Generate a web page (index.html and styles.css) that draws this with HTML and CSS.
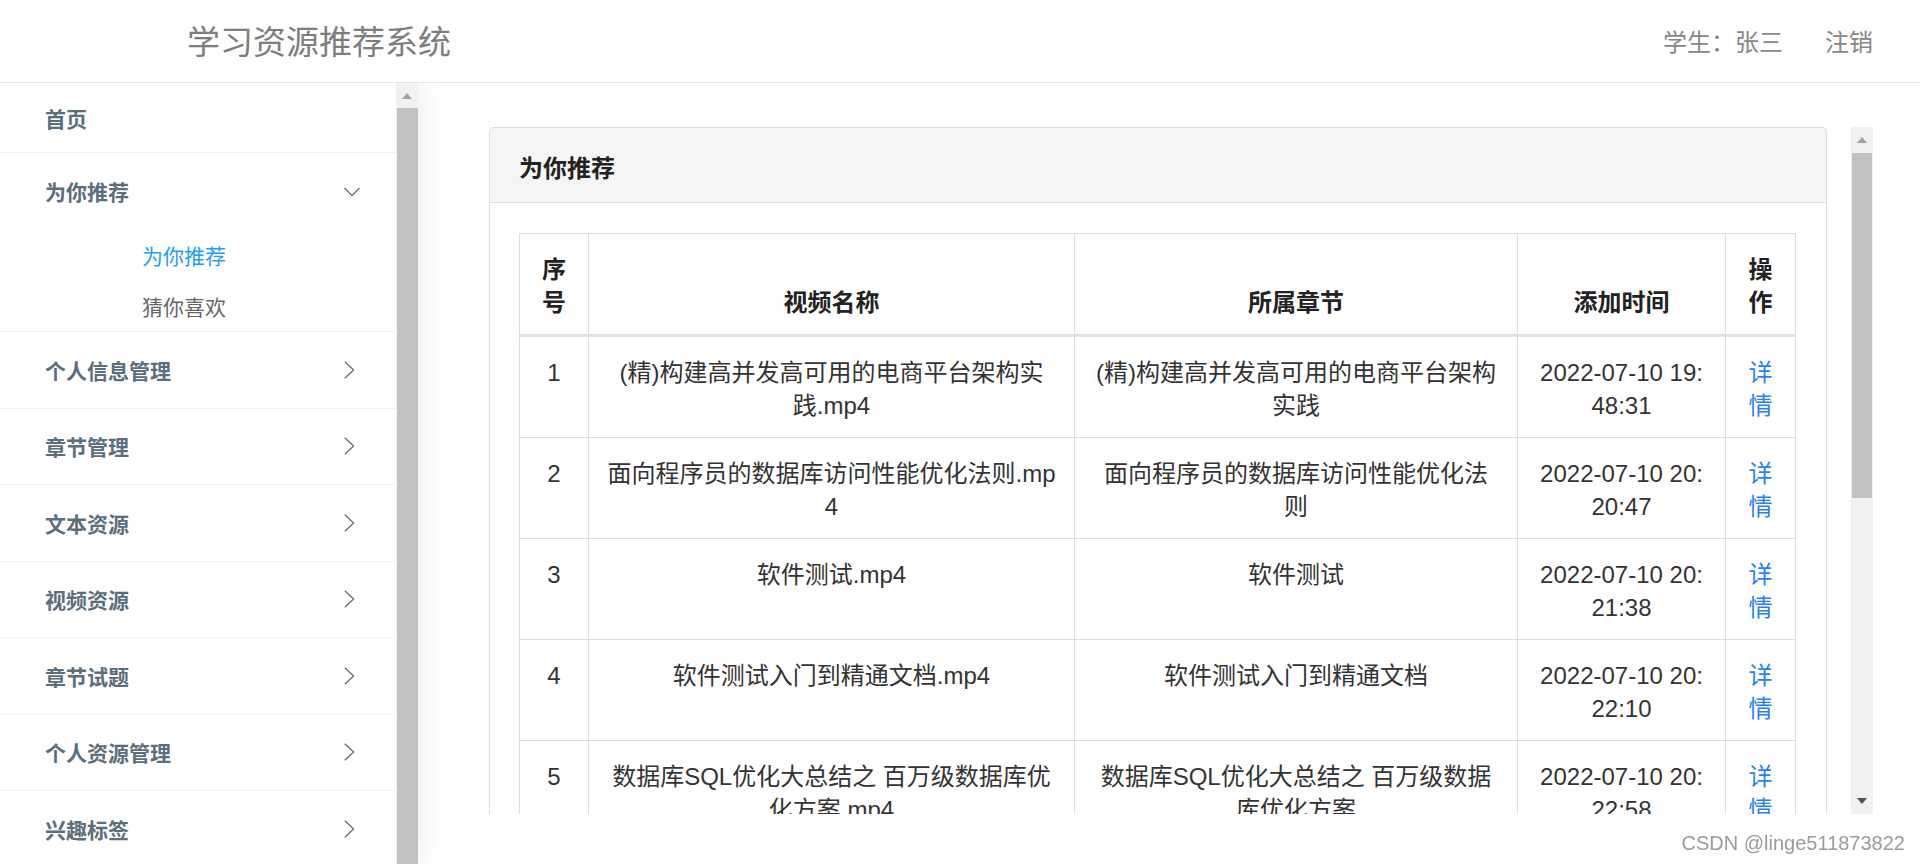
FILE: index.html
```html
<!DOCTYPE html>
<html lang="zh-CN">
<head>
<meta charset="utf-8">
<title>学习资源推荐系统</title>
<link rel="stylesheet" href="styles.css">
</head>
<body>
<header class="topbar">
  <div class="brand">学习资源推荐系统</div>
  <nav class="user-nav">
    <span class="user-name">学生：张三</span>
    <a class="logout">注销</a>
  </nav>
</header>

<div class="layout">
  <aside class="side">
    <ul class="menu">
      <li class="menu-item home"><div class="menu-title">首页</div></li>
      <li class="menu-item open">
        <div class="menu-title">为你推荐
          <svg class="chev-down" width="16" height="10" viewBox="0 0 16 10"><path d="M0.6 1 L8 8.6 L15.4 1" fill="none" stroke="#5f6f7b" stroke-width="1.3"/></svg>
        </div>
        <ul class="submenu">
          <li class="sub-item active">为你推荐</li>
          <li class="sub-item">猜你喜欢</li>
        </ul>
      </li>
      <li class="menu-item"><div class="menu-title">个人信息管理
        <svg class="chev-right" width="16" height="18" viewBox="0 0 16 18"><path d="M0.8 0.8 L9.6 9 L0.8 17.2" fill="none" stroke="#5f6f7b" stroke-width="1.3"/></svg></div></li>
      <li class="menu-item"><div class="menu-title">章节管理
        <svg class="chev-right" width="16" height="18" viewBox="0 0 16 18"><path d="M0.8 0.8 L9.6 9 L0.8 17.2" fill="none" stroke="#5f6f7b" stroke-width="1.3"/></svg></div></li>
      <li class="menu-item"><div class="menu-title">文本资源
        <svg class="chev-right" width="16" height="18" viewBox="0 0 16 18"><path d="M0.8 0.8 L9.6 9 L0.8 17.2" fill="none" stroke="#5f6f7b" stroke-width="1.3"/></svg></div></li>
      <li class="menu-item"><div class="menu-title">视频资源
        <svg class="chev-right" width="16" height="18" viewBox="0 0 16 18"><path d="M0.8 0.8 L9.6 9 L0.8 17.2" fill="none" stroke="#5f6f7b" stroke-width="1.3"/></svg></div></li>
      <li class="menu-item"><div class="menu-title">章节试题
        <svg class="chev-right" width="16" height="18" viewBox="0 0 16 18"><path d="M0.8 0.8 L9.6 9 L0.8 17.2" fill="none" stroke="#5f6f7b" stroke-width="1.3"/></svg></div></li>
      <li class="menu-item"><div class="menu-title">个人资源管理
        <svg class="chev-right" width="16" height="18" viewBox="0 0 16 18"><path d="M0.8 0.8 L9.6 9 L0.8 17.2" fill="none" stroke="#5f6f7b" stroke-width="1.3"/></svg></div></li>
      <li class="menu-item"><div class="menu-title">兴趣标签
        <svg class="chev-right" width="16" height="18" viewBox="0 0 16 18"><path d="M0.8 0.8 L9.6 9 L0.8 17.2" fill="none" stroke="#5f6f7b" stroke-width="1.3"/></svg></div></li>
    </ul>
    <div class="scrollbar side-scrollbar">
      <div class="sb-btn"><span class="tri-up"></span></div>
      <div class="sb-thumb side-thumb"></div>
    </div>
  </aside>

  <main class="content">
    <div class="scroll-box">
      <div class="viewport">
        <section class="panel">
          <div class="panel-head">为你推荐</div>
          <div class="panel-body">
            <table class="data-table">
              <colgroup>
                <col class="c-no"><col class="c-name"><col class="c-chapter"><col class="c-time"><col class="c-op">
              </colgroup>
              <thead>
                <tr><th>序号</th><th>视频名称</th><th>所属章节</th><th>添加时间</th><th>操作</th></tr>
              </thead>
              <tbody>
                <tr>
                  <td>1</td>
                  <td>(精)构建高并发高可用的电商平台架构实<br>践.mp4</td>
                  <td>(精)构建高并发高可用的电商平台架构实践</td>
                  <td>2022-07-10 19:48:31</td>
                  <td><a class="link">详情</a></td>
                </tr>
                <tr>
                  <td>2</td>
                  <td>面向程序员的数据库访问性能优化法则.mp4</td>
                  <td>面向程序员的数据库访问性能优化法则</td>
                  <td>2022-07-10 20:20:47</td>
                  <td><a class="link">详情</a></td>
                </tr>
                <tr>
                  <td>3</td>
                  <td>软件测试.mp4</td>
                  <td>软件测试</td>
                  <td>2022-07-10 20:21:38</td>
                  <td><a class="link">详情</a></td>
                </tr>
                <tr>
                  <td>4</td>
                  <td>软件测试入门到精通文档.mp4</td>
                  <td>软件测试入门到精通文档</td>
                  <td>2022-07-10 20:22:10</td>
                  <td><a class="link">详情</a></td>
                </tr>
                <tr>
                  <td>5</td>
                  <td>数据库SQL优化大总结之 百万级数据库优化方案.mp4</td>
                  <td>数据库SQL优化大总结之 百万级数据库优化方案</td>
                  <td>2022-07-10 20:22:58</td>
                  <td><a class="link">详情</a></td>
                </tr>
              </tbody>
            </table>
          </div>
        </section>
      </div>
      <div class="scrollbar main-scrollbar">
        <div class="sb-btn main-btn"><span class="tri-up"></span></div>
        <div class="sb-track">
          <div class="sb-thumb main-thumb"></div>
        </div>
        <div class="sb-btn main-btn"><span class="tri-down"></span></div>
      </div>
    </div>
  </main>
</div>

<div class="watermark">CSDN @linge511873822</div>
</body>
</html>
```

FILE: styles.css
```css
* {
  box-sizing: border-box;
}

html,
body {
  margin: 0;
  height: 100%;
}

body {
  font-family: "Noto Sans CJK SC", sans-serif;
  background: #ffffff;
  color: #333333;
  overflow: hidden;
}

/* ---------- top bar ---------- */
.topbar {
  position: relative;
  z-index: 2;
  height: 83px;
  display: flex;
  align-items: center;
  justify-content: space-between;
  padding: 0 47px 0 187px;
  background: #ffffff;
  border-bottom: 1px solid #e6e6e6;
}

.brand {
  font-size: 33px;
  line-height: 40px;
  color: #7d7d7d;
  margin-top: -3px;
}

.user-nav {
  display: flex;
  align-items: center;
  gap: 42px;
  font-size: 24px;
  line-height: 32px;
  color: #878787;
}

.logout {
  color: #878787;
  cursor: pointer;
}

/* ---------- layout ---------- */
.layout {
  display: flex;
  height: calc(100vh - 83px);
}

.side {
  position: relative;
  z-index: 1;
  display: flex;
  width: 418px;
  flex-shrink: 0;
  overflow: hidden;
  background: #ffffff;
  box-shadow: 4px 0 26px rgba(0, 0, 0, 0.07);
}

.menu {
  width: 396px;
  flex-shrink: 0;
  list-style: none;
  margin: 0;
  padding: 0;
}

.menu-item {
  border-bottom: 1px solid #f1f1f1;
}

.menu-title {
  display: flex;
  align-items: center;
  justify-content: space-between;
  height: 75.5px;
  padding: 0 36px 0 45px;
  font-size: 21px;
  font-weight: 700;
  color: #5b6e7b;
}

.home .menu-title {
  height: 69px;
}

.open .menu-title {
  height: 76px;
}

.chev-down {
  margin-top: 2px;
}

.submenu {
  list-style: none;
  margin: 0;
  padding: 0;
}

.sub-item {
  height: 51px;
  display: flex;
  align-items: center;
  padding-left: 142px;
  font-size: 21px;
  color: #666666;
}

.sub-item.active {
  color: #1ea0f2;
}

/* ---------- fake scrollbars ---------- */
.scrollbar {
  width: 22px;
  flex-shrink: 0;
  display: flex;
  flex-direction: column;
  background: #f1f1f1;
}

.sb-btn {
  height: 25px;
  display: flex;
  align-items: center;
  justify-content: center;
  flex-shrink: 0;
}

.main-btn {
  height: 26px;
}

.tri-up {
  width: 0;
  height: 0;
  border-left: 5px solid transparent;
  border-right: 5px solid transparent;
  border-bottom: 6px solid #a3a3a3;
}

.tri-down {
  width: 0;
  height: 0;
  border-left: 5px solid transparent;
  border-right: 5px solid transparent;
  border-top: 6px solid #505050;
}

.sb-thumb {
  background: #c1c1c1;
}

.side-thumb {
  flex: 1;
  margin-left: 1px;
}

.sb-track {
  flex: 1;
  padding: 0 1px;
}

.main-thumb {
  height: 345px;
}

/* ---------- main content ---------- */
.content {
  flex: 1;
  min-width: 0;
  padding: 44px 47px 0 71px;
}

.scroll-box {
  display: flex;
  gap: 24px;
  height: 687px;
}

.viewport {
  flex: 1;
  min-width: 0;
  overflow: hidden;
}

.panel {
  border: 1px solid #dddddd;
  border-radius: 4px;
  background: #ffffff;
}

.panel-head {
  height: 75px;
  display: flex;
  align-items: center;
  padding: 3px 29px 0;
  background: #f5f5f5;
  border-bottom: 1px solid #dddddd;
  border-radius: 4px 4px 0 0;
  font-size: 24px;
  font-weight: 700;
  color: #222222;
}

.panel-body {
  padding: 30px 31px 40px 29px;
}

/* ---------- table ---------- */
.data-table {
  width: 100%;
  border-collapse: collapse;
  table-layout: fixed;
  font-family: "Liberation Sans", "Noto Sans CJK SC", sans-serif;
  font-size: 24px;
  line-height: 33px;
  color: #333333;
}

.c-no { width: 69px; }
.c-name { width: 486px; }
.c-chapter { width: 443px; }
.c-time { width: 208px; }
.c-op { width: 70px; }

.data-table th,
.data-table td {
  border: 1px solid #dddddd;
  padding: 19px 18px 15px;
  text-align: center;
  word-break: break-all;
}

.data-table th {
  vertical-align: bottom;
  font-weight: 700;
  color: #222222;
  border-bottom: 3px solid #dee1e6;
}

.data-table td {
  vertical-align: top;
}

.link {
  color: #2a7ff5;
  cursor: pointer;
}

/* ---------- watermark overlay ---------- */
.watermark {
  position: fixed;
  right: 15px;
  bottom: 9px;
  font-family: "Liberation Sans", sans-serif;
  font-size: 20px;
  color: #9b9b9b;
  text-shadow: 0 0 1px #ffffff;
}
```
